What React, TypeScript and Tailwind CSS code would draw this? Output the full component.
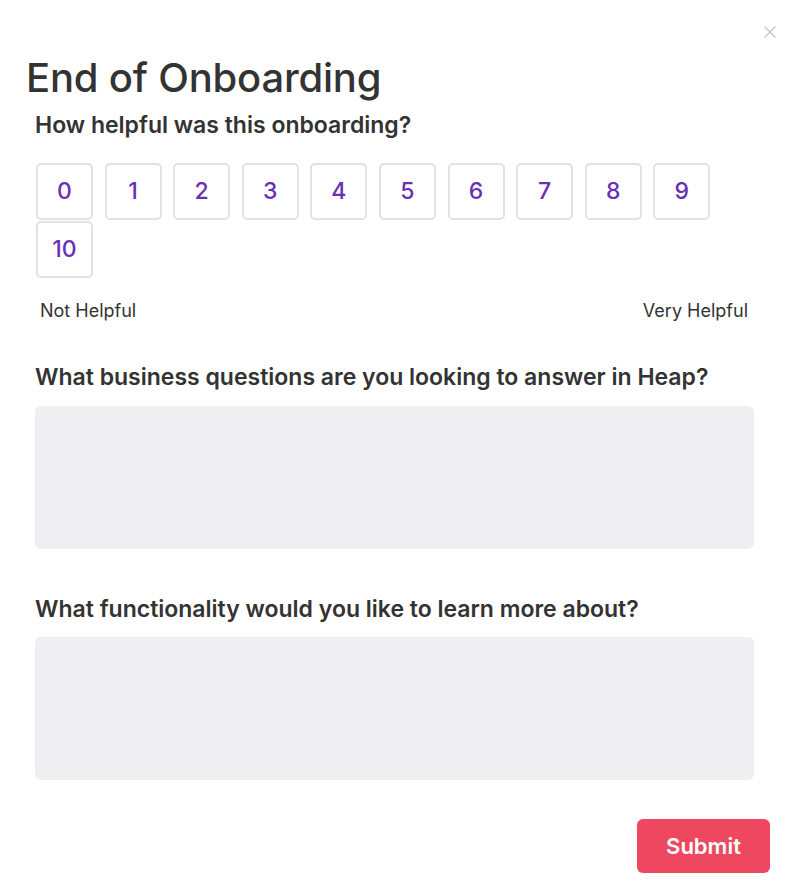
import { X } from "lucide-react";

const scores = [0, 1, 2, 3, 4, 5, 6, 7, 8, 9, 10];

export default function App() {
  return (
    <div
      className="relative w-[800px] h-[896px] bg-white text-[#333333] overflow-hidden"
      style={{ fontFamily: "Inter, 'Noto Sans', sans-serif" }}
    >
      {/* close */}
      <button className="absolute top-[22px] right-[20px] text-[#c4c4c4]">
        <X className="w-[20px] h-[20px]" strokeWidth={1.6} />
      </button>

      <h1 className="mt-[54px] pl-[26px] text-[40px] leading-[48px] font-medium tracking-[-0.2px]">
        End of Onboarding
      </h1>

      <div className="px-[35px]">
        <h2 className="mt-[9px] text-[23px] leading-[28px] font-semibold">
          How helpful was this onboarding?
        </h2>

        {/* score buttons */}
        <div className="mt-[24px] flex flex-wrap w-[700px] gap-x-[11.6px] gap-y-[1px] pl-[1px]">
          {scores.map((n) => (
            <button
              key={n}
              className="w-[57px] h-[57px] rounded-[5px] border-2 border-[#e2e2e2] bg-white text-[#6a2fb8] text-[23px] font-medium flex items-center justify-center"
            >
              {n}
            </button>
          ))}
        </div>

        <div className="mt-[21px] w-[718px] flex justify-between px-[5px] text-[18px] leading-[24px] text-[#333333]">
          <span>Not Helpful</span>
          <span>Very Helpful</span>
        </div>

        <h2 className="mt-[40px] text-[23px] leading-[28px] font-semibold">
          What business questions are you looking to answer in Heap?
        </h2>
        <textarea className="mt-[15px] block w-[719px] h-[143px] rounded-[6px] bg-[#efeef0] resize-none outline-none" />

        <h2 className="mt-[46px] text-[23px] leading-[28px] font-semibold">
          What functionality would you like to learn more about?
        </h2>
        <textarea className="mt-[14px] block w-[719px] h-[143px] rounded-[6px] bg-[#efeef0] resize-none outline-none" />
      </div>

      <div className="flex justify-end pr-[30px] mt-[39px]">
        <button className="w-[133px] h-[54px] rounded-[6px] bg-[#ee4860] text-white text-[22px] font-semibold">
          Submit
        </button>
      </div>
    </div>
  );
}
